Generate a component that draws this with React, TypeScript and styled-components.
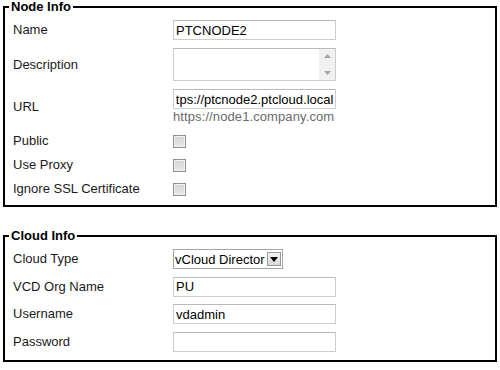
import React, { useEffect, useRef } from 'react'
import styled, { createGlobalStyle } from 'styled-components'

const GlobalStyle = createGlobalStyle`
  html, body {
    margin: 0;
    padding: 0;
    background: #ffffff;
  }
  body {
    font-family: "Liberation Sans", Arial, sans-serif;
    font-size: 13px;
    color: #111;
  }
`

const Page = styled.div`
  width: 500px;
  padding: 0 3px;
  box-sizing: border-box;
`

const Frame = styled.fieldset<{ $gap?: number }>`
  margin: ${props => props.$gap || 0}px 0 0 0;
  padding: 6px 8px 8px 8px;
  border: 2px solid #000;
  min-width: 0;
`

const Legend = styled.legend`
  margin-left: -4px;
  padding: 0 2px;
  font-weight: bold;
  font-size: 13px;
  line-height: 14px;
  color: #000;
`

const Form = styled.div<{ $rowGap: number }>`
  display: grid;
  grid-template-columns: 160px 1fr;
  row-gap: ${props => props.$rowGap}px;
  align-items: center;
`

const Label = styled.label`
  font-size: 13px;
  line-height: 16px;
  color: #1a1a1a;
`

const TextInput = styled.input`
  box-sizing: border-box;
  width: 163px;
  height: 20px;
  margin: 0;
  padding: 0 2px;
  border: 1px solid #cdcdcd;
  border-top-color: #b9b9b9;
  border-radius: 0;
  font-family: "Liberation Sans", Arial, sans-serif;
  font-size: 13px;
  color: #000;
  background: #fff;
  outline: none;
`

const AreaBox = styled.div`
  position: relative;
  width: 163px;
  height: 33px;
`

const TextArea = styled.textarea`
  box-sizing: border-box;
  display: block;
  width: 163px;
  height: 33px;
  margin: 0;
  padding: 1px 19px 1px 2px;
  border: 1px solid #cdcdcd;
  border-top-color: #b9b9b9;
  font-family: "Liberation Sans", Arial, sans-serif;
  font-size: 13px;
  resize: none;
  overflow: hidden;
  outline: none;
`

const ScrollTrack = styled.div`
  position: absolute;
  top: 1px;
  right: 1px;
  bottom: 1px;
  width: 16px;
  background: #f1f1f1;
  display: flex;
  flex-direction: column;
  justify-content: space-between;
  align-items: center;
  padding: 5px 0;
  box-sizing: border-box;
  pointer-events: none;
`

const Stack = styled.div`
  display: flex;
  flex-direction: column;
`

const Hint = styled.span`
  font-size: 13px;
  line-height: 16px;
  color: #6b6b6b;
  letter-spacing: 0.1px;
`

const CheckCell = styled.div`
  height: 16px;
  display: flex;
  align-items: center;
`

const Check = styled.input.attrs({ type: 'checkbox' })`
  appearance: none;
  -webkit-appearance: none;
  width: 13px;
  height: 13px;
  margin: 0;
  border: 1px solid #8e8e8e;
  box-sizing: border-box;
  background: linear-gradient(#d2d2d2, #e8e8e8);
  box-shadow: inset 0 0 0 1px #f3f3f3;
`

const SelectBox = styled.div`
  position: relative;
  width: 110px;
  height: 20px;
`

const Select = styled.select`
  appearance: none;
  -webkit-appearance: none;
  box-sizing: border-box;
  width: 110px;
  height: 20px;
  margin: 0;
  padding: 0 0 0 1px;
  border: 1px solid #a5a5a5;
  border-radius: 0;
  background: #fff;
  font-family: "Liberation Sans", Arial, sans-serif;
  font-size: 13px;
  color: #000;
  outline: none;
`

const ArrowButton = styled.span`
  position: absolute;
  top: 3px;
  right: 2px;
  width: 14px;
  height: 14px;
  box-sizing: border-box;
  border: 1px solid #9a9a9a;
  background: linear-gradient(#f2f2f2, #d8d8d8);
  display: flex;
  align-items: center;
  justify-content: center;
  pointer-events: none;
`

function UrlInput() {
  const ref = useRef<HTMLInputElement>(null)
  useEffect(() => {
    if (ref.current) ref.current.scrollLeft = ref.current.scrollWidth
  }, [])
  return <TextInput ref={ref} defaultValue="https://ptcnode2.ptcloud.local" />
}

export default function App() {
  return (
    <>
      <GlobalStyle />
      <Page>
        <Frame>
          <Legend>Node Info</Legend>
          <Form $rowGap={8}>
            <Label>Name</Label>
            <TextInput defaultValue="PTCNODE2" />

            <Label>Description</Label>
            <AreaBox>
              <TextArea />
              <ScrollTrack>
                <svg width="7" height="4" viewBox="0 0 7 4">
                  <path d="M0 4 L3.5 0 L7 4 Z" fill="#a3a3a3" />
                </svg>
                <svg width="7" height="4" viewBox="0 0 7 4">
                  <path d="M0 0 H7 L3.5 4 Z" fill="#a3a3a3" />
                </svg>
              </ScrollTrack>
            </AreaBox>

            <Label>URL</Label>
            <Stack>
              <UrlInput />
              <Hint>https://node1.company.com</Hint>
            </Stack>

            <Label>Public</Label>
            <CheckCell><Check /></CheckCell>

            <Label>Use Proxy</Label>
            <CheckCell><Check /></CheckCell>

            <Label>Ignore SSL Certificate</Label>
            <CheckCell><Check /></CheckCell>
          </Form>
        </Frame>

        <Frame $gap={22}>
          <Legend>Cloud Info</Legend>
          <Form $rowGap={7.67}>
            <Label>Cloud Type</Label>
            <SelectBox>
              <Select defaultValue="vcd">
                <option value="vcd">vCloud Director</option>
              </Select>
              <ArrowButton>
                <svg width="8" height="5" viewBox="0 0 8 5">
                  <path d="M0 0 H8 L4 5 Z" fill="#000" />
                </svg>
              </ArrowButton>
            </SelectBox>

            <Label>VCD Org Name</Label>
            <TextInput defaultValue="PU" />

            <Label>Username</Label>
            <TextInput defaultValue="vdadmin" />

            <Label>Password</Label>
            <TextInput type="password" />
          </Form>
        </Frame>
      </Page>
    </>
  )
}
